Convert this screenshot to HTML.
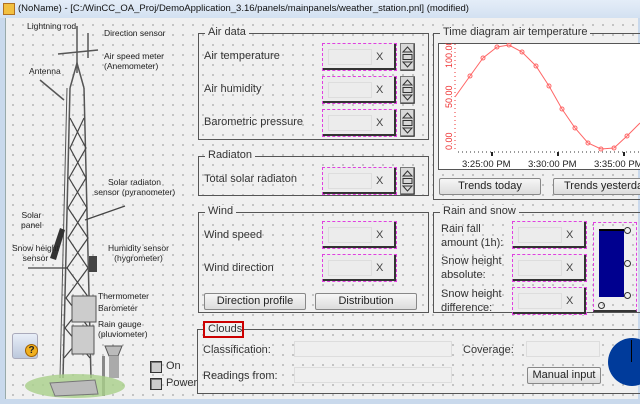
<!DOCTYPE html>
<html><head><style>
*{margin:0;padding:0;box-sizing:border-box}
body{width:640px;height:404px;overflow:hidden;background:#c9d9ec;font-family:"Liberation Sans",sans-serif;font-size:11px;color:#222;position:relative}
#title{position:absolute;left:0;top:0;width:640px;height:18px;background:linear-gradient(#e4edf8,#d3e1f1);font-size:9.5px;line-height:18px;padding-left:18px;color:#111}
#ico{position:absolute;left:3px;top:3px;width:12px;height:12px;background:#f2c040;border:1px solid #b07020}
#canvas{position:absolute;left:5px;top:18px;width:633px;height:381px;background-color:#f0f0f0;background-image:radial-gradient(#8a8a8a 0.6px,transparent 0.9px);background-size:10px 10px;background-position:2px 2px;border-left:1px solid #9aa}
.a{position:absolute}
.grp{position:absolute;border:1px solid #555}
.lg{position:absolute;top:-8px;left:6px;background:#f0f0f0;padding:0 3px;font-size:11px;color:#333}
.fld{position:absolute;width:75px;height:28px;border:1px dashed #e040e0;background:#ececec;box-shadow:inset -2px -2px 0 #333}
.fld i{position:absolute;left:5px;top:5px;width:44px;height:16px;border:1px solid #ddd;background:#ececec}
.fld b{position:absolute;left:53px;top:7px;font-weight:normal;color:#444;font-size:11px}
.spn{position:absolute;width:15px;height:28px}
.btn{position:absolute;height:17px;border:1px solid #888;border-radius:2px;background:linear-gradient(#f6f6f6,#dcdcdc);text-align:center;line-height:15px;font-size:11px;color:#222}
.lbl{position:absolute;font-size:11px;color:#333}
.sm{position:absolute;font-size:8.5px;color:#222;line-height:10px}
.inp{position:absolute;border:1px solid #ddd;background:#efefef}
.cb{position:absolute;width:12px;height:12px;border:1px solid #333;background:#ccc;box-shadow:inset 1px 1px 0 #777}
</style></head><body>
<div id="title"><div id="ico"></div>(NoName) - [C:/WinCC_OA_Proj/DemoApplication_3.16/panels/mainpanels/weather_station.pnl] (modified)</div>
<div id="canvas"></div>
<svg width="0" height="0" style="position:absolute"><defs>
<symbol id="sp" viewBox="0 0 15 28"><rect x="0.5" y="0.5" width="14" height="27" fill="#d8d8d8" stroke="#777"/><line x1="14" y1="1" x2="14" y2="27" stroke="#333"/><line x1="1" y1="27" x2="14" y2="27" stroke="#333"/><path d="M3 9 L7.5 4 L12 9Z M3 19 L7.5 24 L12 19Z" fill="none" stroke="#333"/><rect x="3" y="11.5" width="9" height="5" fill="none" stroke="#333"/></symbol>
</defs></svg>

<!-- tower -->
<svg class="a" style="left:0;top:18px" width="200" height="386">
<g stroke="#555" fill="none" stroke-width="1.5">
<line x1="77" y1="8" x2="77" y2="55"/>
<line x1="58" y1="36" x2="98" y2="32"/>
<line x1="88" y1="15" x2="88" y2="40"/>
<line x1="40" y1="62" x2="64" y2="82"/>
<path d="M70 70 L77 45 L84 70"/>
<line x1="70" y1="70" x2="63" y2="360"/>
<line x1="84" y1="70" x2="91" y2="360"/>
<line x1="67" y1="70" x2="60" y2="360" stroke-width="1"/>
</g>
<g stroke="#444" stroke-width="1.2" fill="none">
<path d="M70 100 L86 130 L69 160 L87 190 L68 220 L88 250 L66 280 L89 310 L64 340"/>
<path d="M84 100 L70 130 L86 160 L68 190 L88 220 L67 250 L89 280 L65 310 L90 340"/>
<line x1="85" y1="202" x2="125" y2="188"/>
<line x1="28" y1="250" x2="68" y2="250"/>
</g>
<path d="M50 240 L60 210 L65 212 L56 242Z" fill="#333"/>
<rect x="89" y="238" width="8" height="16" fill="#444"/>
<rect x="72" y="278" width="24" height="26" fill="#ccc" stroke="#555"/>
<rect x="72" y="308" width="22" height="28" fill="#ccc" stroke="#555"/>
<path d="M105 328 L122 328 L118 338 L109 338Z" fill="#bbb" stroke="#555"/>
<rect x="109" y="338" width="10" height="22" fill="#aaa"/>
<rect x="102" y="338" width="3" height="40" fill="#888"/>
<ellipse cx="75" cy="368" rx="50" ry="12" fill="#a9cf8a" opacity=".8"/>
<path d="M50 365 L95 362 L98 376 L55 378Z" fill="#bbb" stroke="#777"/>
</svg>
<div class="sm" style="left:27px;top:21px">Lightning rod</div>
<div class="sm" style="left:104px;top:28px">Direction sensor</div>
<div class="sm" style="left:104px;top:51px">Air speed meter<br>(Anemometer)</div>
<div class="sm" style="left:29px;top:66px">Antenna</div>
<div class="sm" style="left:108px;top:177px">Solar radiaton</div>
<div class="sm" style="left:94px;top:187px">sensor (pyranometer)</div>
<div class="sm" style="left:21px;top:210px;text-align:center">Solar<br>panel</div>
<div class="sm" style="left:12px;top:243px;text-align:center">Snow height<br>sensor</div>
<div class="sm" style="left:108px;top:243px;text-align:center">Humidity sensor<br>(hygrometer)</div>
<div class="sm" style="left:98px;top:291px">Thermometer<br><span style="line-height:14px">Barometer</span></div>
<div class="sm" style="left:98px;top:319px">Rain gauge<br>(pluviometer)</div>
<div class="a" style="left:12px;top:333px;width:26px;height:26px;border:1px solid #aab;border-radius:3px;background:linear-gradient(#e8eef8,#bcc8dc)"><div style="position:absolute;left:12px;top:10px;width:13px;height:13px;border-radius:50%;background:#f0b020;border:1px solid #a06000;font-size:10px;font-weight:bold;text-align:center;line-height:12px">?</div></div>
<div class="cb" style="left:150px;top:361px"></div><div class="lbl" style="left:166px;top:360px">On</div>
<div class="cb" style="left:150px;top:378px"></div><div class="lbl" style="left:166px;top:377px">Power</div>

<!-- Air data -->
<div class="grp" style="left:198px;top:33px;width:231px;height:107px"><span class="lg">Air data</span></div>
<div class="lbl" style="left:204px;top:50px">Air temperature</div>
<div class="lbl" style="left:204px;top:83px">Air humidity</div>
<div class="lbl" style="left:204px;top:116px">Barometric pressure</div>
<div class="fld" style="left:322px;top:43px"><i></i><b>X</b></div>
<div class="fld" style="left:322px;top:76px"><i></i><b>X</b></div>
<div class="fld" style="left:322px;top:109px"><i></i><b>X</b></div>
<svg class="spn" style="left:400px;top:43px"><use href="#sp"/></svg>
<svg class="spn" style="left:400px;top:76px"><use href="#sp"/></svg>
<svg class="spn" style="left:400px;top:109px"><use href="#sp"/></svg>

<!-- Radiaton -->
<div class="grp" style="left:198px;top:156px;width:231px;height:40px"><span class="lg">Radiaton</span></div>
<div class="lbl" style="left:204px;top:173px">Total solar radiaton</div>
<div class="fld" style="left:322px;top:167px"><i></i><b>X</b></div>
<svg class="spn" style="left:400px;top:167px"><use href="#sp"/></svg>

<!-- Wind -->
<div class="grp" style="left:198px;top:212px;width:231px;height:101px"><span class="lg">Wind</span></div>
<div class="lbl" style="left:204px;top:229px">Wind speed</div>
<div class="lbl" style="left:204px;top:262px">Wind direction</div>
<div class="fld" style="left:322px;top:221px"><i></i><b>X</b></div>
<div class="fld" style="left:322px;top:254px"><i></i><b>X</b></div>
<div class="btn" style="left:204px;top:293px;width:102px">Direction profile</div>
<div class="btn" style="left:315px;top:293px;width:102px">Distribution</div>

<!-- Time diagram -->
<div class="grp" style="left:433px;top:33px;width:210px;height:167px"><span class="lg">Time diagram air temperature</span></div>
<svg class="a" style="left:438px;top:43px" width="202" height="127">
<rect x="0.5" y="0.5" width="203" height="126" fill="#fff" stroke="#555"/>
<g fill="#e33" font-size="9" font-family="Liberation Sans">
<text transform="translate(14,25) rotate(-90)">100.00</text>
<text transform="translate(14,65) rotate(-90)">50.00</text>
<text transform="translate(14,107) rotate(-90)">0.00</text>
</g>
<line x1="17" y1="1" x2="17" y2="108" stroke="#e33" stroke-dasharray="1 3"/>
<line x1="20" y1="109" x2="202" y2="109" stroke="#333" stroke-dasharray="1 3"/>
<g stroke="#222" stroke-width="2"><line x1="54" y1="109" x2="54" y2="113"/><line x1="120" y1="109" x2="120" y2="113"/><line x1="186" y1="109" x2="186" y2="113"/></g>
<polyline fill="none" stroke="#f66" stroke-width="1" points="17,54 32,33 45,15 59,4 71,2 84,9 98,23 111,43 124,66 137,85 150,100 163,106 176,105 189,93 202,80"/>
<g fill="none" stroke="#f66"><circle cx="32" cy="33" r="2"/><circle cx="45" cy="15" r="2"/><circle cx="59" cy="4" r="2"/><circle cx="71" cy="2" r="2"/><circle cx="84" cy="9" r="2"/><circle cx="98" cy="23" r="2"/><circle cx="111" cy="43" r="2"/><circle cx="124" cy="66" r="2"/><circle cx="137" cy="85" r="2"/><circle cx="150" cy="100" r="2"/><circle cx="163" cy="106" r="2"/><circle cx="176" cy="105" r="2"/><circle cx="189" cy="93" r="2"/></g>
<g fill="#222" font-size="9.5" font-family="Liberation Sans"><text x="24" y="124">3:25:00 PM</text><text x="90" y="124">3:30:00 PM</text><text x="156" y="124">3:35:00 PM</text></g>
</svg>
<div class="btn" style="left:439px;top:178px;width:102px">Trends today</div>
<div class="btn" style="left:553px;top:178px;width:100px;text-align:left;padding-left:10px;white-space:nowrap;overflow:hidden">Trends yesterday</div>

<!-- Rain and snow -->
<div class="grp" style="left:433px;top:212px;width:210px;height:101px"><span class="lg">Rain and snow</span></div>
<div class="lbl" style="left:441px;top:222px;line-height:14px">Rain fall<br>amount (1h):</div>
<div class="lbl" style="left:441px;top:254px;line-height:14px">Snow height<br>absolute:</div>
<div class="lbl" style="left:441px;top:287px;line-height:14px">Snow height<br>difference:</div>
<div class="fld" style="left:512px;top:221px"><i></i><b>X</b></div>
<div class="fld" style="left:512px;top:254px"><i></i><b>X</b></div>
<div class="fld" style="left:512px;top:287px"><i></i><b>X</b></div>
<div class="a" style="left:593px;top:222px;width:44px;height:90px;border:1px dashed #e040e0;border-bottom:2px solid #333"></div>
<div class="a" style="left:599px;top:229px;width:25px;height:68px;background:#00008f;border-top:2px solid #000"></div>
<div class="a" style="left:624px;top:227px;width:7px;height:7px;border:1px solid #333;border-radius:50%"></div>
<div class="a" style="left:624px;top:260px;width:7px;height:7px;border:1px solid #333;border-radius:50%"></div>
<div class="a" style="left:624px;top:292px;width:7px;height:7px;border:1px solid #333;border-radius:50%"></div>
<div class="a" style="left:598px;top:302px;width:7px;height:7px;border:1px solid #333;border-radius:50%"></div>

<!-- Clouds -->
<div class="grp" style="left:197px;top:329px;width:446px;height:65px"></div>
<div class="a" style="left:203px;top:321px;width:41px;height:17px;border:2px solid #c00;background:#f0f0f0;font-size:11px;line-height:13px;padding-left:3px;color:#333">Clouds</div>
<div class="lbl" style="left:203px;top:344px">Classification:</div>
<div class="lbl" style="left:203px;top:370px">Readings from:</div>
<div class="lbl" style="left:463px;top:344px">Coverage:</div>
<div class="inp" style="left:294px;top:341px;width:158px;height:16px"></div>
<div class="inp" style="left:294px;top:367px;width:158px;height:16px"></div>
<div class="inp" style="left:526px;top:341px;width:74px;height:16px"></div>
<div class="btn" style="left:527px;top:367px;width:74px">Manual input</div>
<div class="a" style="left:608px;top:338px;width:48px;height:48px;border-radius:50%;background:#003b9b"></div>
<div class="a" style="left:631px;top:340px;width:1px;height:22px;background:#000"></div>
</body></html>
